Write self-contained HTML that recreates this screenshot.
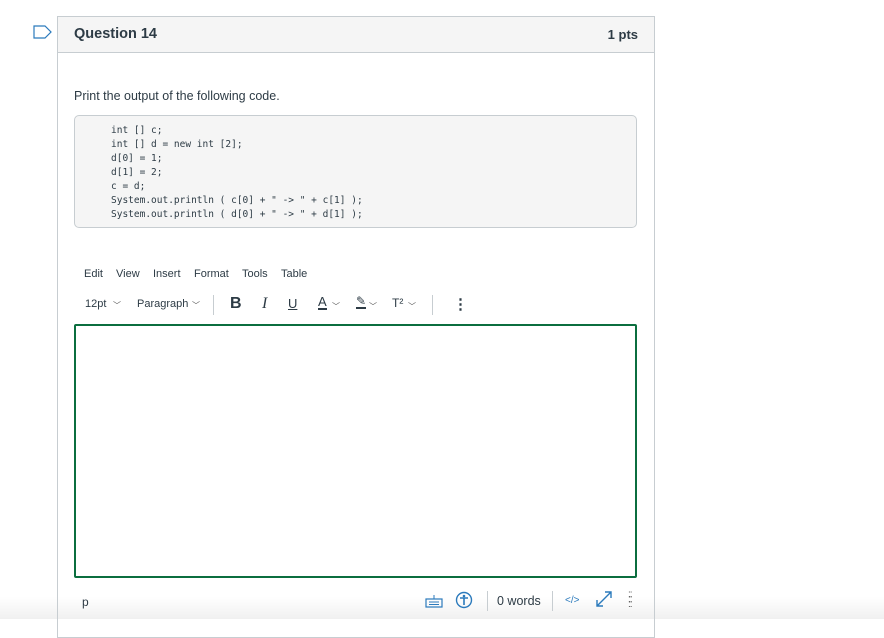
<!DOCTYPE html>
<html><head><style>
body{margin:0;width:884px;height:619px;background:#fff;font-family:"Liberation Sans",sans-serif;color:#2d3b45;position:relative;overflow:hidden}
.box{position:absolute;left:57px;top:16px;width:596px;height:620px;border:1px solid #c7cdd1;}
.hdr{height:35px;background:#f5f5f5;border-bottom:1px solid #c7cdd1;position:relative}
.hdr .t{position:absolute;left:16px;top:9px;font-size:14.5px;font-weight:bold}
.hdr .p{position:absolute;right:16px;top:10px;font-size:13px;font-weight:bold}
.q{position:absolute;left:16px;top:72px;font-size:12.5px}
.code{position:absolute;left:16px;top:98px;width:563px;height:113px;background:#f5f5f5;border:1px solid #c7cdd1;border-radius:5px;box-sizing:border-box}
.code pre{margin:0;position:absolute;left:36px;top:8px;font-family:"DejaVu Sans Mono","Liberation Mono",monospace;font-size:9.5px;line-height:14px;color:#2d3b45}
.menu span{position:absolute;top:251px;font-size:11px}
.tb span,.tb b,.tb i{position:absolute;white-space:nowrap}
.ed{position:absolute;left:16px;top:307px;width:563px;height:254px;border:2px solid #0b6e3f;box-sizing:border-box;border-radius:2px}
.sb{position:absolute;left:0;top:574px;width:884px;height:45px;background:linear-gradient(#fff,#fff 50%,#f0f0f0)}
.sep{width:1px;height:20px;background:#c7cdd1;display:inline-block}
.chev{font-size:8px;color:#555}
</style></head><body>
<svg style="position:absolute;left:33px;top:25px" width="20" height="14"><path d="M1 1H12L18 7L12 13H1Z" fill="none" stroke="#2b7abc" stroke-width="1.2"/></svg>
<div class="sb"></div>
<div class="box">
<div class="hdr"><div class="t">Question 14</div><div class="p">1 pts</div></div>
<div class="q">Print the output of the following code.</div>
<div class="code"><pre>int [] c;
int [] d = new int [2];
d[0] = 1;
d[1] = 2;
c = d;
System.out.println ( c[0] + " -&gt; " + c[1] );
System.out.println ( d[0] + " -&gt; " + d[1] );</pre></div>
<div class="menu"><span style="left:26px">Edit</span><span style="left:58px">View</span><span style="left:95px">Insert</span><span style="left:136px">Format</span><span style="left:184px">Tools</span><span style="left:223px">Table</span></div>
<div class="tb" style="position:absolute;left:0;top:0">
<span style="left:27px;top:281px;font-size:11px">12pt</span><span class="chev" style="left:55px;top:283px">﹀</span>
<span style="left:79px;top:281px;font-size:11px">Paragraph</span><span class="chev" style="left:134px;top:283px">﹀</span>
<span class="sep" style="left:155px;top:278px"></span>
<span style="left:172px;top:278px;font-size:16px;font-weight:bold">B</span>
<i style="left:204px;top:278px;font-family:'Liberation Serif';font-size:16px">I</i>
<span style="left:230px;top:279px;font-size:13px;text-decoration:underline">U</span>
<span style="left:260px;top:279px;font-size:13px;border-bottom:2px solid #2d3b45;line-height:12px">A</span><span class="chev" style="left:274px;top:284px">﹀</span>
<span style="left:298px;top:279px;font-size:12px;border-bottom:2px solid #2d3b45;line-height:11px">✎</span><span class="chev" style="left:311px;top:284px">﹀</span>
<span style="left:334px;top:279px;font-size:12px">T²</span><span class="chev" style="left:350px;top:284px">﹀</span>
<span class="sep" style="left:374px;top:278px"></span>
<b style="left:395px;top:278px;font-size:15px">⋮</b>
</div>
<div class="ed"></div>
<div style="position:absolute;left:24px;top:578px;font-size:12px">p</div>
<svg style="position:absolute;left:367px;top:577px" width="18" height="14"><rect x="1" y="5" width="16" height="8" fill="none" stroke="#2b7abc" stroke-width="1.2"/><path d="M4 8h10M4 10.5h10M9 5V1" stroke="#2b7abc"/></svg>
<svg style="position:absolute;left:397px;top:574px" width="18" height="18"><circle cx="9" cy="9" r="7.5" fill="none" stroke="#2b7abc" stroke-width="1.4"/><circle cx="9" cy="5" r="1.3" fill="#2b7abc"/><path d="M5 7h8M9 7v7" stroke="#2b7abc" stroke-width="1.6"/></svg>
<span class="sep" style="position:absolute;left:429px;top:574px"></span>
<div style="position:absolute;left:439px;top:577px;font-size:12.5px">0 words</div>
<span class="sep" style="position:absolute;left:494px;top:574px"></span>
<div style="position:absolute;left:507px;top:578px;font-size:10px;color:#2b7abc">&lt;/&gt;</div>
<svg style="position:absolute;left:537px;top:573px" width="18" height="18"><path d="M2 16L16 2M10 2h6v6M2 10v6h6" fill="none" stroke="#2b7abc" stroke-width="1.4"/></svg>
<div style="position:absolute;left:570px;top:575px;font-size:10px;line-height:5px;color:#555;letter-spacing:-1px">::<br>::<br>::</div>
</div>
</body></html>
